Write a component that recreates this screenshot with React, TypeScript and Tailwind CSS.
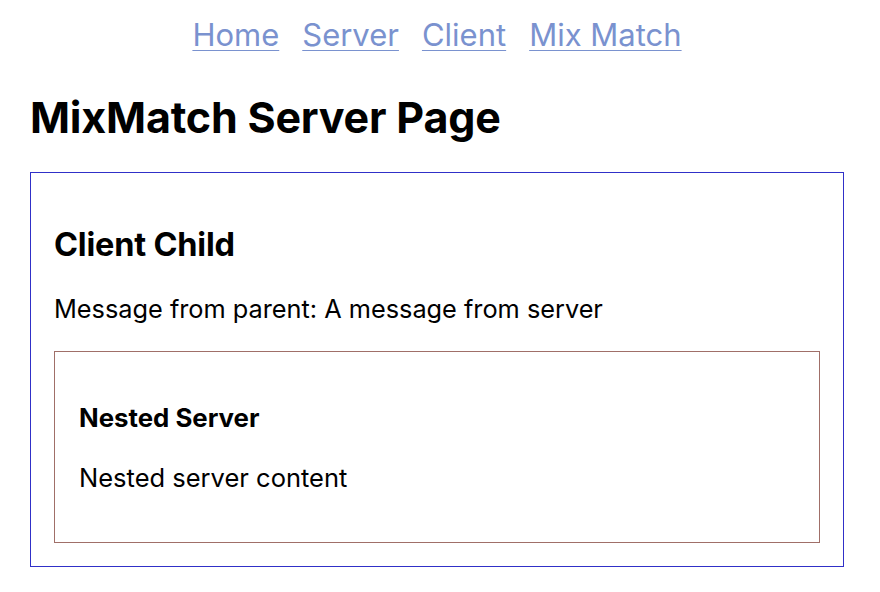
import React from 'react';

const links = ['Home', 'Server', 'Client', 'Mix Match'];

export default function App() {
    return (
        <div className="w-[880px] h-[592px] bg-white text-black font-['Inter',sans-serif] overflow-hidden">
            {/* nav */}
            <nav className="flex justify-center gap-[23px] pt-[15px] pr-[6px] h-[60px]">
                {links.map((l) => (
                    <a key={l} href="#" className="text-[31px] leading-[40px] text-[#7a92cf] underline underline-offset-[4px] decoration-1">
                        {l}
                    </a>
                ))}
            </nav>

            <div className="px-[30px] pr-[36px]">
                <h1 className="text-[43px] font-bold leading-[52px] mt-[31px] tracking-[-0.2px]">MixMatch Server Page</h1>

                {/* server box */}
                <div className="mt-[29px] border border-[#3030c8] px-[23px] pt-[52px] pb-[23px]">
                    <h2 className="text-[32.5px] font-bold leading-[40px] tracking-[-0.2px]">Client Child</h2>
                    <p className="text-[25.3px] leading-[32px] mt-[28px]">Message from parent: A message from server</p>

                    {/* nested server */}
                    <div className="mt-[26px] border border-[#a06f68] px-[24px] pt-[50px] pb-[48px]">
                        <h3 className="text-[25.8px] font-bold leading-[32px]">Nested Server</h3>
                        <p className="text-[25.5px] leading-[32px] mt-[28px]">Nested server content</p>
                    </div>
                </div>
            </div>
        </div>
    );
}
